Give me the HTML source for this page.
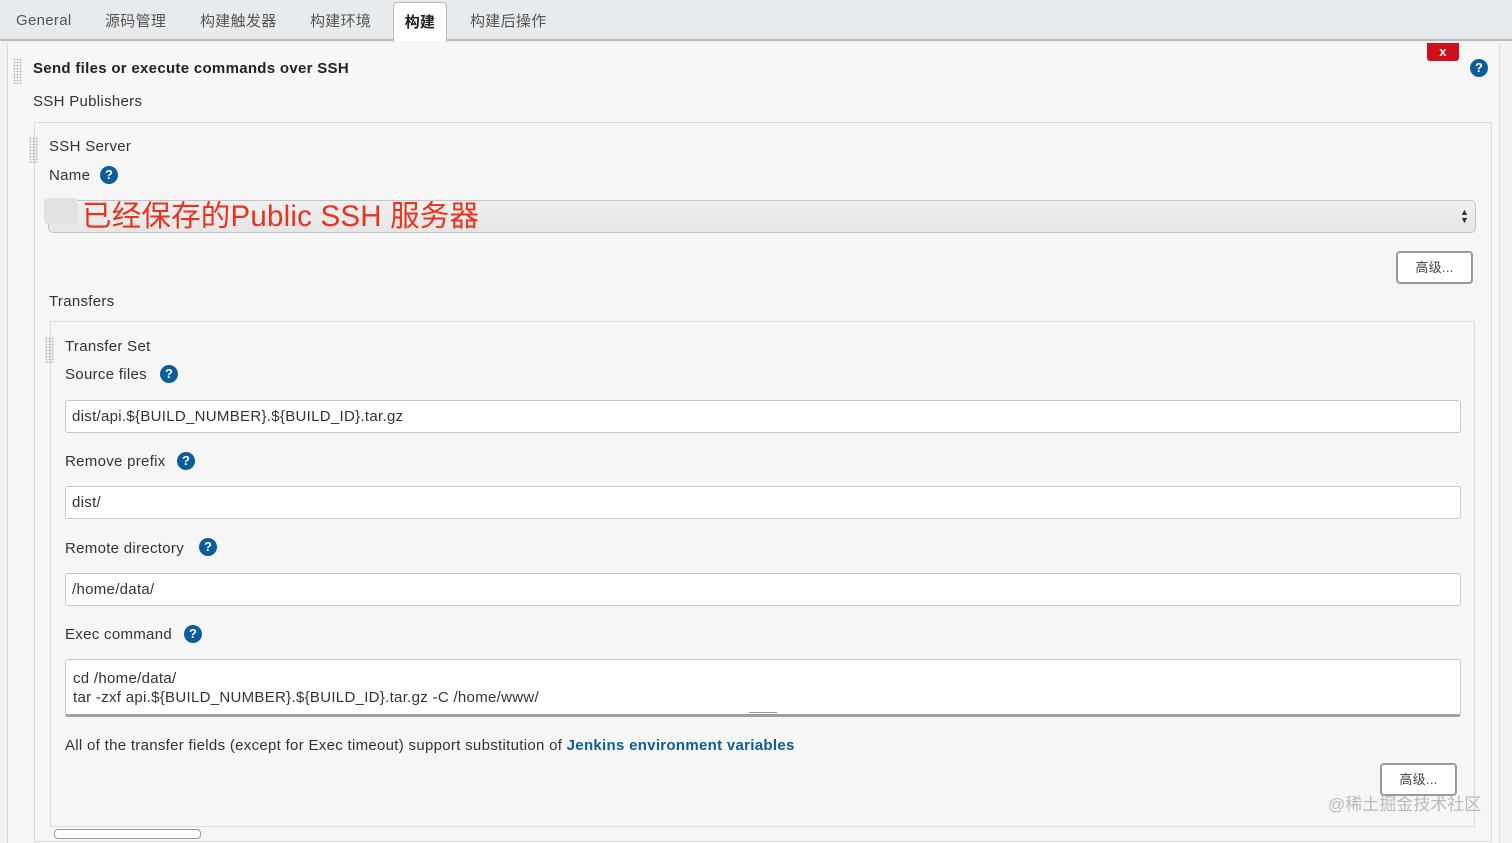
<!DOCTYPE html>
<html><head><meta charset="utf-8"><style>
*{box-sizing:border-box;margin:0;padding:0}
body{width:1512px;height:835px;overflow:hidden;background:#f2f2f2;font-family:"Liberation Sans","Noto Sans CJK SC",sans-serif;color:#333;position:relative;font-size:15px;letter-spacing:0.3px}
.a{position:absolute}
.tabs{left:0;top:0;width:1512px;height:41px;background:#e8ebed;border-bottom:2px solid #b8bcbf}
.tab{position:absolute;top:10px;font-size:15px;color:#555}
.tabon{left:393px;top:2px;width:54px;height:40px;background:#fff;border:1px solid #b8bcbf;border-bottom:none;border-radius:4px 4px 0 0;text-align:center;padding-top:8px;color:#222;font-weight:bold}
.panel{left:7px;top:43px;width:1493px;height:800px;background:#f7f7f7;border-left:1px solid #ddd;border-right:1px solid #ddd}
.box{background:#f6f6f6;border:1px solid #dcdcdc}
.help{width:18px;height:18px;border-radius:50%;background:#0b5e9a;color:#fff;font-size:13px;font-weight:bold;text-align:center;line-height:18px;letter-spacing:0}
.inp{background:#fff;border:1px solid #c8c8c8;border-radius:3px;height:33px;padding:7px 6px;font-size:15px;color:#333}
.grip{width:9px;height:26px;background-image:radial-gradient(#bbb 0.8px,transparent 1px);background-size:3px 3px}
.btn{background:#fff;border:2px solid #9a9a9a;border-radius:4px;font-size:13px;color:#444;text-align:center}
</style></head><body>
<div class="a tabs">
<span class="tab" style="left:16px;top:12px">General</span>
<span class="tab" style="left:105px">源码管理</span>
<span class="tab" style="left:200px">构建触发器</span>
<span class="tab" style="left:310px">构建环境</span>
<div class="a tabon">构建</div>
<span class="tab" style="left:470px">构建后操作</span>
</div>
<div class="a panel"></div>
<div class="a" style="left:1427px;top:43px;width:32px;height:18px;background:#d0101b;color:#fff;font-size:13px;font-weight:bold;text-align:center;line-height:17px;border-radius:0 0 3px 3px">x</div>
<div class="a help" style="left:1470px;top:59px">?</div>
<div class="a grip" style="left:13px;top:58px"></div>
<div class="a" style="left:33px;top:60px;font-weight:bold;font-size:15px;color:#222">Send files or execute commands over SSH</div>
<div class="a" style="left:33px;top:93px">SSH Publishers</div>
<div class="a box" style="left:34px;top:122px;width:1458px;height:720px"></div>
<div class="a grip" style="left:29px;top:137px"></div>
<div class="a" style="left:49px;top:138px">SSH Server</div>
<div class="a" style="left:49px;top:167px">Name</div>
<div class="a help" style="left:100px;top:166px">?</div>
<div class="a" style="left:48px;top:200px;width:1428px;height:33px;border:1px solid #c4c4c4;border-radius:5px;background:linear-gradient(#f0f0f0,#e6e6e6)"></div>
<div class="a" style="left:44px;top:198px;width:34px;height:26px;background:#e2e2e2;border-radius:4px"></div>
<div class="a" style="left:82px;top:193px;font-size:29.5px;color:#e8331f;white-space:nowrap;letter-spacing:0.2px">已经保存的Public SSH 服务器</div>
<div class="a" style="left:1460px;top:208px;font-size:9px;line-height:8px;color:#333">▲<br>▼</div>
<div class="a btn" style="left:1396px;top:251px;width:77px;height:33px;line-height:29px">高级...</div>
<div class="a" style="left:49px;top:293px">Transfers</div>
<div class="a box" style="left:50px;top:321px;width:1425px;height:506px"></div>
<div class="a grip" style="left:45px;top:337px"></div>
<div class="a" style="left:65px;top:338px">Transfer Set</div>
<div class="a" style="left:65px;top:366px">Source files</div>
<div class="a help" style="left:160px;top:365px">?</div>
<div class="a inp" style="left:65px;top:400px;width:1396px">dist/api.${BUILD_NUMBER}.${BUILD_ID}.tar.gz</div>
<div class="a" style="left:65px;top:453px">Remove prefix</div>
<div class="a help" style="left:177px;top:452px">?</div>
<div class="a inp" style="left:65px;top:486px;width:1396px">dist/</div>
<div class="a" style="left:65px;top:540px">Remote directory</div>
<div class="a help" style="left:199px;top:538px">?</div>
<div class="a inp" style="left:65px;top:573px;width:1396px">/home/data/</div>
<div class="a" style="left:65px;top:626px">Exec command</div>
<div class="a help" style="left:184px;top:625px">?</div>
<div class="a inp" style="left:65px;top:659px;width:1396px;height:58px;padding:9px 7px;line-height:19px;border-bottom:3px solid #a0a0a0">cd /home/data/<br>tar -zxf api.${BUILD_NUMBER}.${BUILD_ID}.tar.gz -C /home/www/</div>
<div class="a" style="left:749px;top:712px;width:28px;height:3px;border-top:1px solid #999;border-bottom:1px solid #999"></div>
<div class="a" style="left:65px;top:737px;white-space:nowrap">All of the transfer fields (except for Exec timeout) support substitution of <span style="color:#0b5e9a;font-weight:bold">Jenkins environment variables</span></div>
<div class="a btn" style="left:1380px;top:763px;width:77px;height:33px;line-height:29px">高级...</div>
<div class="a" style="left:1328px;top:790px;font-size:17px;color:#bbb;letter-spacing:0">@稀土掘金技术社区</div>
<div class="a" style="left:54px;top:829px;width:147px;height:10px;background:#fff;border:1px solid #999;border-radius:4px"></div>
</body></html>
